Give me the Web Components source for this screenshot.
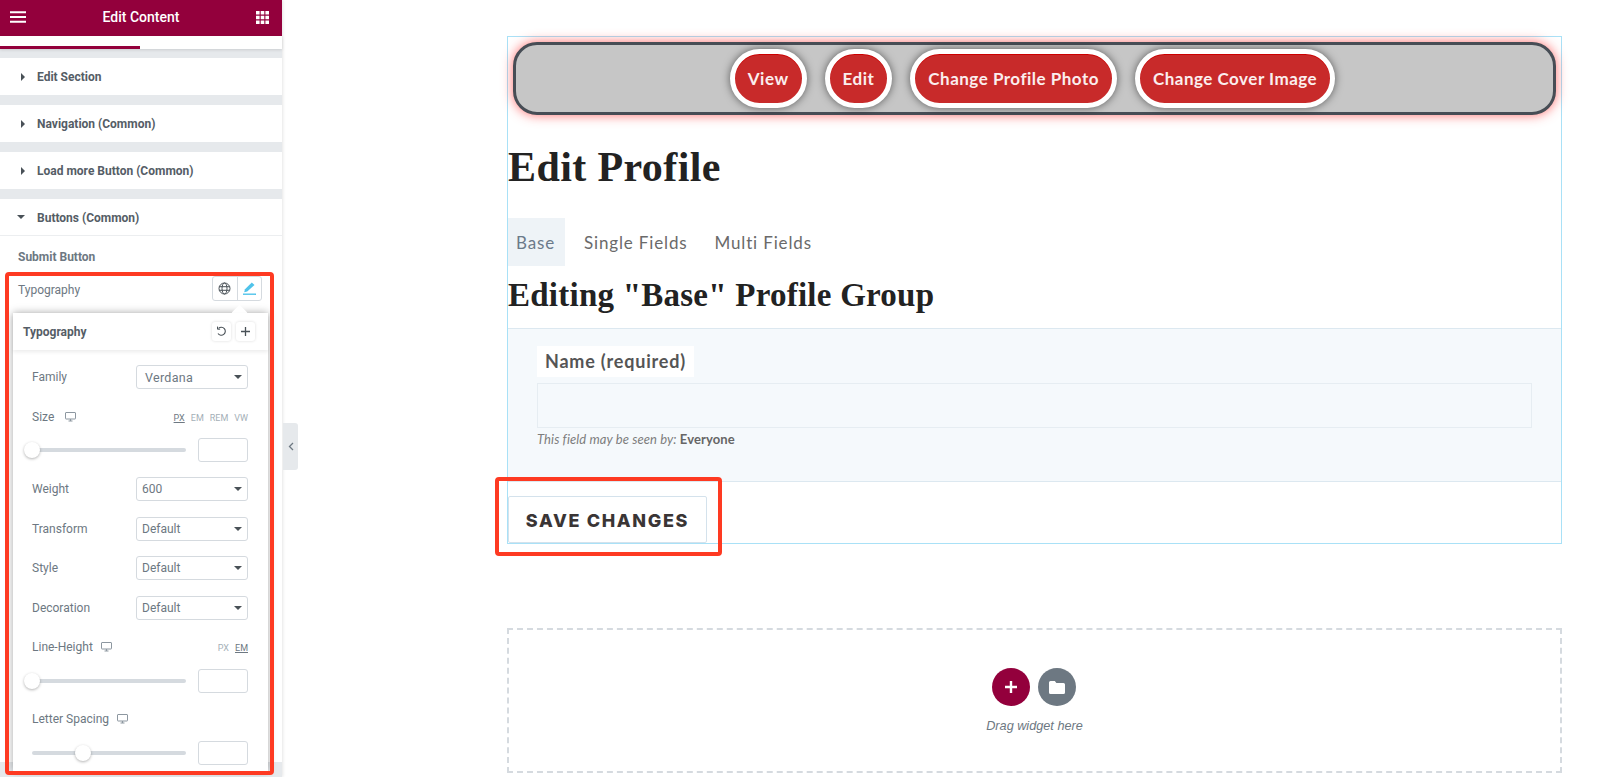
<!DOCTYPE html>
<html>
<head>
<meta charset="utf-8">
<title>Edit Content</title>
<style>
    html, body { margin: 0; padding: 0; height: 100%; background: #fff; overflow: hidden; }
    body { font-family: Roboto, "Liberation Sans", sans-serif; }
</style>
</head>
<body>
<app-root>
    <editor-panel slot="panel">
        <panel-section>Edit Section</panel-section>
        <panel-section>Navigation (Common)</panel-section>
        <panel-section>Load more Button (Common)</panel-section>
        <panel-section open>Buttons (Common)</panel-section>
        <typography-control></typography-control>
    </editor-panel>
    <profile-frame slot="main">
        <nav-bar>
            <pill-link>View</pill-link>
            <pill-link>Edit</pill-link>
            <pill-link>Change Profile Photo</pill-link>
            <pill-link>Change Cover Image</pill-link>
        </nav-bar>
    </profile-frame>
    <drop-zone slot="main"></drop-zone>
</app-root>

<script>
// Small helper, every element gets an open shadow root from its html string
function shadow(el, html) {
    el.attachShadow({ mode: 'open' });
    const template = document.createElement('template');
    template.innerHTML = html;
    el.shadowRoot.appendChild(template.content.cloneNode(true));
}

const monitorIcon = `<svg width="11" height="10" viewBox="0 0 11 10"><path d="M1 .5h9a.5.5 0 0 1 .5.5v5.500a.5.5 0 0 1-.5.5H1a.5.5 0 0 1-.5-.5V1A.5.5 0 0 1 1 .5z" fill="none" stroke="#8d97a0" stroke-width="1"/><path d="M3.500 9h4M5.500 7v2" stroke="#8d97a0" stroke-width="1.200"/></svg>`;

// Page shell
class AppRoot extends HTMLElement {
    constructor() {
        super();
        shadow(this, `
            <style>
                :host { display: flex; position: relative; width: 1600px; height: 777px; overflow: hidden; background: #fff; }
                .main { flex: 1; min-width: 0; padding: 36px 38px 0 225px; }
                .mark { position: absolute; box-sizing: border-box; border: 4px solid #fe3a22; border-radius: 4px; pointer-events: none; }
                .mark.one { left: 5px; top: 272px; width: 269px; height: 503px; }
                .mark.two { left: 495px; top: 477px; width: 227px; height: 79px; }
            </style>
            <slot name="panel"></slot>
            <div class="main"><slot name="main"></slot></div>
            <div class="mark one"></div>
            <div class="mark two"></div>
        `);
    }
}

// Left editor column
class EditorPanel extends HTMLElement {
    constructor() {
        super();
        shadow(this, `
            <style>
                :host { display: flex; flex-direction: column; position: relative; width: 282px; height: 777px; flex: none; background: #e6e9ec; box-shadow: 1px 0 3px rgba(0,0,0,.1); }
                header { height: 36px; box-sizing: border-box; padding: 0 13px 2px 10px; flex: none; background: #93003c; color: #fff; display: flex; align-items: center; justify-content: space-between; font-size: 14px; font-weight: 500; }
                .tabs { height: 13px; flex: none; background: #fff; position: relative; box-shadow: 0 1px 3px rgba(0,0,0,.12); margin-bottom: 9px; }
                .tabs i { display: block; position: absolute; left: 0; bottom: 0; width: 140px; height: 3px; background: #93003c; }
                .list { display: flex; flex-direction: column; gap: 10px; }
                .toggle { position: absolute; left: 283px; top: 423px; width: 15px; height: 47px; background: #e6e9ec; border-radius: 0 3px 3px 0; display: flex; align-items: center; justify-content: center; }
            </style>
            <header>
                <svg width="16" height="12" viewBox="0 0 16 12"><path d="M0 1.200h16M0 6h16M0 10.800h16" stroke="#fff" stroke-width="2"/></svg>
                <span>Edit Content</span>
                <svg width="13" height="13" viewBox="0 0 13 13" fill="#fff"><path d="M0 0h3.600v3.600H0zM4.700 0h3.600v3.600H4.700zM9.400 0H13v3.600H9.400zM0 4.700h3.600v3.600H0zM4.700 4.700h3.600v3.600H4.700zM9.400 4.700H13v3.600H9.400zM0 9.400h3.600V13H0zM4.700 9.400h3.600V13H4.700zM9.400 9.400H13V13H9.400z"/></svg>
            </header>
            <div class="tabs"><i></i></div>
            <div class="list"><slot></slot></div>
            <div class="toggle"><svg width="6" height="9" viewBox="0 0 6 9"><path d="M5 1 1.500 4.500 5 8" fill="none" stroke="#6d7882" stroke-width="1.300"/></svg></div>
        `);
    }
}

class PanelSection extends HTMLElement {
    constructor() {
        super();
        const open = this.hasAttribute('open');
        const arrow = open
            ? '<svg width="9" height="5" viewBox="0 0 9 5"><path d="M0 0h8L4 4z" fill="#495157"/></svg>'
            : '<svg width="5" height="8" viewBox="0 0 5 8"><path d="M0 0l4 4-4 4z" fill="#495157"/></svg>';
        shadow(this, `
            <style>
                :host { display: block; box-sizing: border-box; height: 37px; background: #fff; padding-top: 1px; }
                :host([open]) { border-bottom: 1px solid #eceef0; }
                .row { height: 35px; display: flex; align-items: center; font: 700 12px Roboto, sans-serif; color: #555d66; }
                .arrow { width: 37px; padding-left: ${open ? 17 : 21}px; box-sizing: border-box; display: flex; flex: none; }
            </style>
            <div class="row"><span class="arrow">${arrow}</span><slot></slot></div>
        `);
    }
}

// Everything below the last section header, the popover sits over it
class TypographyControl extends HTMLElement {
    constructor() {
        super();
        shadow(this, `
            <style>
                :host { display: block; background: #fff; height: 526px; margin-top: -10px; position: relative; font: 12px Roboto, sans-serif; color: #6d7882; }
                .sub { padding: 14px 18px 0; height: 24px; box-sizing: border-box; font-weight: 700; color: #6d7882; line-height: 14px; }
                .type { display: flex; align-items: center; justify-content: space-between; padding: 6px 20px 0 18px; height: 36px; box-sizing: border-box; margin-top: 7px; }
                .type > span:first-child { padding-top: 4px; }
                .group { display: flex; width: 50px; height: 25px; box-sizing: border-box; border: 1px solid #d5dadf; border-radius: 3px; }
                .group span { flex: 1; display: flex; align-items: center; justify-content: center; }
                .group span + span { border-left: 1px solid #d5dadf; }
                .pop { position: absolute; left: 13px; top: 77px; width: 255px; height: 458px; box-sizing: border-box; background: #fff; box-shadow: 0 0 8px rgba(0,0,0,.35); }
                .pop::before { content: ""; position: absolute; left: 221px; top: -6px; width: 11px; height: 11px; background: #fff; transform: rotate(45deg); }
                .head { position: relative; height: 37px; display: flex; align-items: center; justify-content: space-between; padding: 0 13px 0 10px; box-shadow: 0 2px 4px rgba(0,0,0,.08); font-weight: 700; color: #555d66; }
                .tools { display: flex; gap: 5px; }
                .tools span { width: 19px; height: 19px; border-radius: 3px; box-shadow: 0 0 3px rgba(0,0,0,.15); display: flex; align-items: center; justify-content: center; }
                .body { padding: 15px 20px 0 19px; }
            </style>
            <div class="sub">Submit Button</div>
            <div class="type">
                <span>Typography</span>
                <span class="group">
                    <span><svg width="13" height="13" viewBox="0 0 13 13" fill="none" stroke="#495157" stroke-width="1"><circle cx="6.500" cy="6.500" r="5.500"/><ellipse cx="6.500" cy="6.500" rx="2.500" ry="5.500"/><path d="M1.200 4.700h10.600M1.200 8.300h10.600"/></svg></span>
                    <span><svg width="13" height="13" viewBox="0 0 13 13"><path d="M8.800 .5 11.500 3 4.200 9.600 1.200 10.200 2 7.200z" fill="#4fc3ea"/><path d="M0 12.200h13" stroke="#4fc3ea" stroke-width="1.400"/></svg></span>
                </span>
            </div>
            <div class="pop">
                <div class="head">
                    <span>Typography</span>
                    <span class="tools">
                        <span><svg width="11" height="11" viewBox="0 0 11 11" fill="none" stroke="#495157" stroke-width="1.100"><path d="M2.500 2.400A4 4 0 1 1 2 7.500"/><path d="M1.500 .6v2.600h2.600" stroke-width="1"/></svg></span>
                        <span><svg width="11" height="11" viewBox="0 0 11 11"><path d="M5.500 1v9M1 5.500h9" stroke="#495157" stroke-width="1.300"/></svg></span>
                    </span>
                </div>
                <div class="body">
                    <select-row value="Verdana" wide style="margin-bottom:16px">Family</select-row>
                    <slider-row units="PX EM REM VW" pos="0" gap="11" close>Size</slider-row>
                    <select-row value="600" style="margin-bottom:16px">Weight</select-row>
                    <select-row value="Default">Transform</select-row>
                    <select-row value="Default" style="margin-bottom:16px">Style</select-row>
                    <select-row value="Default">Decoration</select-row>
                    <slider-row units="PX EM" active="EM" pos="0" style="margin-bottom:14px">Line-Height</slider-row>
                    <slider-row pos="51">Letter Spacing</slider-row>
                </div>
            </div>
        `);
    }
}

class SelectRow extends HTMLElement {
    constructor() {
        super();
        shadow(this, `
            <style>
                :host { display: flex; align-items: center; justify-content: space-between; height: 24px; margin-bottom: 15px; font: 12px Roboto, sans-serif; color: #6d7882; }
                .box { width: 112px; height: 24px; box-sizing: border-box; border: 1px solid #d5dadf; border-radius: 3px; display: flex; align-items: center; justify-content: space-between; padding: 0 5px 0 5px; color: #6d7882; }
                :host([wide]) .box { padding-left: 8px; font-size: 12.500px; letter-spacing: .3px; }
            </style>
            <span><slot></slot></span>
            <span class="box"><span>${this.getAttribute('value')}</span><svg width="8" height="4" viewBox="0 0 8 4"><path d="M0 0h8L4 4z" fill="#495157"/></svg></span>
        `);
    }
}

class SliderRow extends HTMLElement {
    constructor() {
        super();
        const list = (this.getAttribute('units') || '').split(' ').filter(Boolean);
        const active = this.getAttribute('active') || list[0];
        const units = list.map(u => `<span class="${u === active ? 'on' : ''}">${u}</span>`).join('');
        shadow(this, `
            <style>
                :host { display: block; margin-bottom: 15px; font: 12px Roboto, sans-serif; color: #6d7882; }
                .top { height: 24px; display: flex; align-items: center; gap: ${this.getAttribute('gap') || 8}px; }
                .units { margin-left: auto; display: flex; gap: 6px; font-size: 9px; color: #a4afb7; padding-top: 2px; }
                .units .on { color: #6d7882; text-decoration: underline; }
                .bottom { display: flex; align-items: center; justify-content: space-between; margin-top: 10px; }
                :host([close]) .bottom { margin-top: 9px; }
                .track { position: relative; width: 154px; height: 4px; background: #d5dadf; border-radius: 2px; }
                .thumb { position: absolute; top: -6px; margin-left: -8px; left: ${this.getAttribute('pos')}px; width: 16px; height: 16px; background: #fff; border-radius: 50%; box-shadow: 0 1px 3px rgba(0,0,0,.3); }
                .input { width: 50px; height: 24px; box-sizing: border-box; border: 1px solid #d5dadf; border-radius: 3px; }
            </style>
            <div class="top"><span><slot></slot></span>${monitorIcon}<span class="units">${units}</span></div>
            <div class="bottom"><div class="track"><div class="thumb"></div></div><div class="input"></div></div>
        `);
    }
}

// Canvas part
class ProfileFrame extends HTMLElement {
    constructor() {
        super();
        shadow(this, `
            <style>
                :host { display: block; box-sizing: border-box; height: 508px; border: 1px solid #a9e1f7; color: #1f1f1f; }
                h1, h2 { font-family: "Liberation Serif", serif; font-weight: 700; margin: 0; color: #222; }
                h1 { font-size: 42px; line-height: 50px; margin-top: 27px; letter-spacing: .4px; }
                .tabs { display: flex; margin-top: 26px; font: 17px Lato, sans-serif; letter-spacing: .85px; color: #6a6a6a; }
                .tabs span { height: 48px; line-height: 50px; padding: 0 8px; }
                .tabs .on { width: 41px; background: #eef3f7; color: #6b7a8a; margin-right: 11px; }
                .tabs span:last-child { margin-left: 11px; }
                h2 { font-size: 33px; line-height: 40px; margin-top: 9px; letter-spacing: .24px; }
                .field { margin-top: 13px; height: 154px; box-sizing: border-box; background: #f5f9fc; border: solid #dce8f0; border-width: 1px 0; padding: 17px 29px 0; }
                .label { display: inline-block; height: 31px; padding: 0 8px; background: #fff; font: 700 18px/31px Lato, sans-serif; letter-spacing: .8px; color: #555; vertical-align: top; }
                .input { height: 45px; box-sizing: border-box; margin-top: 6px; border: 1px solid #e6edf2; }
                .desc { margin-top: 4px; font: italic 13px/14px Lato, sans-serif; letter-spacing: .1px; color: #7d7d7d; }
                .desc b { font-style: normal; color: #666; }
                .save { box-sizing: border-box; width: 199px; height: 47px; margin-top: 14px; border: 1px solid #d4e2ec; border-radius: 2px; font: 800 18px/47px Inter, sans-serif; letter-spacing: 1.650px; color: #3a3535; text-align: center; background: #fff; white-space: nowrap; }
            </style>
            <slot></slot>
            <h1>Edit Profile</h1>
            <div class="tabs"><span class="on">Base</span><span>Single Fields</span><span>Multi Fields</span></div>
            <h2>Editing "Base" Profile Group</h2>
            <div class="field">
                <span class="label">Name (required)</span>
                <div class="input"></div>
                <div class="desc">This field may be seen by: <b>Everyone</b></div>
            </div>
            <div class="save">SAVE CHANGES</div>
        `);
    }
}

class NavBar extends HTMLElement {
    constructor() {
        super();
        shadow(this, `
            <style>
                :host { display: flex; justify-content: center; align-items: center; gap: 18px; box-sizing: border-box; height: 73px; margin: 5px 5px 0; background: #c6c6c6; border: 3px solid #474d55; border-radius: 24px; box-shadow: 0 0 12px rgba(255,50,50,.7); padding-right: 4px; }
            </style>
            <slot></slot>
        `);
    }
}

class PillLink extends HTMLElement {
    constructor() {
        super();
        shadow(this, `
            <style>
                :host { display: block; box-sizing: border-box; height: 59px; border: 5px solid #fff; border-radius: 30px; background: #c82a2a; padding: 0 13px; font: 700 17px/49px Lato, sans-serif; letter-spacing: .5px; color: #fbeeee; box-shadow: 0 0 8px rgba(0,0,0,.55), inset 0 1px 0 #c00; white-space: nowrap; }
            </style>
            <slot></slot>
        `);
    }
}

class DropZone extends HTMLElement {
    constructor() {
        super();
        shadow(this, `
            <style>
                :host { display: flex; flex-direction: column; align-items: center; box-sizing: border-box; height: 145px; margin: 84px 0 0 0; border: 2px dashed #d5dadf; padding-top: 38px; }
                .btns { display: flex; gap: 8px; padding-right: 1px; }
                .btn { width: 38px; height: 38px; border-radius: 50%; display: flex; align-items: center; justify-content: center; }
                .add { background: #93003c; }
                .folder { background: #6d7882; }
                p { margin: 13px 0 0; font: italic 12.700px/15px "Liberation Sans", sans-serif; color: #6d7882; }
            </style>
            <div class="btns">
                <div class="btn add"><svg width="12" height="12" viewBox="0 0 12 12"><path d="M6 0v12M0 6h12" stroke="#fff" stroke-width="2.400"/></svg></div>
                <div class="btn folder"><svg width="16" height="13" viewBox="0 0 16 13"><path d="M1.500 0h4.300l1.600 2h7.100A1.500 1.500 0 0 1 16 3.500v8a1.500 1.500 0 0 1-1.500 1.500h-13A1.500 1.500 0 0 1 0 11.500v-10A1.500 1.500 0 0 1 1.500 0z" fill="#fff"/></svg></div>
            </div>
            <p>Drag widget here</p>
        `);
    }
}

customElements.define('app-root', AppRoot);
customElements.define('editor-panel', EditorPanel);
customElements.define('panel-section', PanelSection);
customElements.define('typography-control', TypographyControl);
customElements.define('select-row', SelectRow);
customElements.define('slider-row', SliderRow);
customElements.define('profile-frame', ProfileFrame);
customElements.define('nav-bar', NavBar);
customElements.define('pill-link', PillLink);
customElements.define('drop-zone', DropZone);
</script>
</body>
</html>
